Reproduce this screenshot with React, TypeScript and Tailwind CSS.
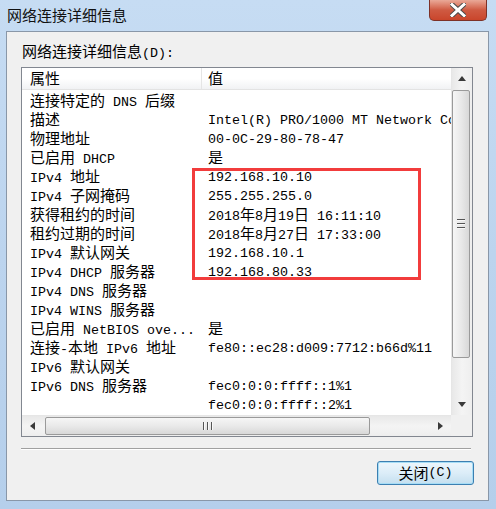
import React from "react";

const CJK_RUN = /([\u2E80-\u9FFF\uFF00-\uFFEF\u3000-\u303F]+)/;
const CJK_TEST = /[\u2E80-\u9FFF\uFF00-\uFFEF\u3000-\u303F]/;

function Mixed({ text }: { text: string }) {
  const parts = text.split(CJK_RUN);
  return (
    <>
      {parts.map((p, i) =>
        p === "" ? null : CJK_TEST.test(p) ? (
          <span key={i} className="font-['Noto_Sans_CJK_SC',sans-serif] text-[15px]">
            {p}
          </span>
        ) : (
          <span key={i} className="font-['Liberation_Mono',monospace] text-[13.33px]">
            {p}
          </span>
        )
      )}
    </>
  );
}

const rows: [string, string][] = [
  ["连接特定的 DNS 后缀", ""],
  ["描述", "Intel(R) PRO/1000 MT Network Connection"],
  ["物理地址", "00-0C-29-80-78-47"],
  ["已启用 DHCP", "是"],
  ["IPv4 地址", "192.168.10.10"],
  ["IPv4 子网掩码", "255.255.255.0"],
  ["获得租约的时间", "2018年8月19日 16:11:10"],
  ["租约过期的时间", "2018年8月27日 17:33:00"],
  ["IPv4 默认网关", "192.168.10.1"],
  ["IPv4 DHCP 服务器", "192.168.80.33"],
  ["IPv4 DNS 服务器", ""],
  ["IPv4 WINS 服务器", ""],
  ["已启用 NetBIOS ove...", "是"],
  ["连接-本地 IPv6 地址", "fe80::ec28:d009:7712:b66d%11"],
  ["IPv6 默认网关", ""],
  ["IPv6 DNS 服务器", "fec0:0:0:ffff::1%1"],
  ["", "fec0:0:0:ffff::2%1"],
];

function Arrow({ dir }: { dir: "up" | "down" | "left" | "right" }) {
  if (dir === "up")
    return (
      <svg width="8" height="5" viewBox="0 0 8 5">
        <path d="M4 0 L8 5 L0 5 Z" fill="#3a3a3a" />
      </svg>
    );
  if (dir === "down")
    return (
      <svg width="8" height="5" viewBox="0 0 8 5">
        <path d="M0 0 L8 0 L4 5 Z" fill="#3a3a3a" />
      </svg>
    );
  if (dir === "left")
    return (
      <svg width="5" height="8" viewBox="0 0 5 8">
        <path d="M5 0 L5 8 L0 4 Z" fill="#3a3a3a" />
      </svg>
    );
  return (
    <svg width="5" height="8" viewBox="0 0 5 8">
      <path d="M0 0 L5 4 L0 8 Z" fill="#3a3a3a" />
    </svg>
  );
}

function VScroll() {
  return (
    <div className="flex w-[21px] flex-col border-l border-[#e6e6e6] bg-gradient-to-r from-[#e8e8e8] via-[#f4f4f4] to-[#eeeeee]">
      <div className="flex h-[21px] items-center justify-center">
        <Arrow dir="up" />
      </div>
      <div className="flex-1 pt-[1px]">
        <div className="flex h-[268px] w-[18px] items-center justify-center rounded-[2px] border border-[#9a9a9a] bg-gradient-to-r from-[#f6f6f6] via-[#e9e9e9] to-[#d8d8d8]">
          <div className="flex flex-col gap-[2px]">
            <div className="h-[2px] w-[8px] border-b border-[#f8f8f8] bg-[#555]" />
            <div className="h-[2px] w-[8px] border-b border-[#f8f8f8] bg-[#555]" />
            <div className="h-[2px] w-[8px] border-b border-[#f8f8f8] bg-[#555]" />
          </div>
        </div>
      </div>
      <div className="flex h-[21px] items-center justify-center">
        <Arrow dir="down" />
      </div>
    </div>
  );
}

function HScroll() {
  return (
    <div className="flex h-[21px] w-[429px] border-t border-[#e6e6e6] bg-gradient-to-b from-[#e8e8e8] via-[#f4f4f4] to-[#eeeeee]">
      <div className="flex w-[21px] items-center justify-center">
        <Arrow dir="left" />
      </div>
      <div className="flex-1 pl-[2px] pt-[1px]">
        <div className="flex h-[18px] w-[325px] items-center justify-center rounded-[2px] border border-[#9a9a9a] bg-gradient-to-b from-[#f6f6f6] via-[#e9e9e9] to-[#d8d8d8]">
          <div className="flex gap-[2px]">
            <div className="h-[8px] w-[2px] border-r border-[#f8f8f8] bg-[#555]" />
            <div className="h-[8px] w-[2px] border-r border-[#f8f8f8] bg-[#555]" />
            <div className="h-[8px] w-[2px] border-r border-[#f8f8f8] bg-[#555]" />
          </div>
        </div>
      </div>
      <div className="flex w-[21px] items-center justify-center">
        <Arrow dir="right" />
      </div>
    </div>
  );
}

function CloseButton() {
  return (
    <div className="mr-[2px] flex h-[21px] w-[58px] items-center justify-center overflow-hidden rounded-b-[5px] border border-t-0 border-[#7d3127] bg-gradient-to-b from-[#e9a898] via-[#cf5a42] to-[#c9452b]">
      <svg width="16" height="14" viewBox="0 0 16 14">
        <path d="M2 1.5 L14 12.5 M14 1.5 L2 12.5" stroke="#4a4a4a" strokeWidth="5" strokeLinecap="square" />
        <path d="M2 1.5 L14 12.5 M14 1.5 L2 12.5" stroke="#ffffff" strokeWidth="3" strokeLinecap="square" />
      </svg>
    </div>
  );
}

export default function App() {
  return (
    <div className="relative flex h-[509px] w-[496px] flex-col overflow-hidden bg-gradient-to-b from-[#c6dcf3] via-[#bcd4ee] to-[#b5cfeb] pb-[8px] pl-[6px] pr-[7px] text-black">
      {/* Title bar */}
      <div className="flex h-[31px] items-start justify-between">
        <div className="pl-[1px] pt-[5px] font-['Noto_Sans_CJK_SC',sans-serif] text-[15px] leading-[20px] text-[#111]">
          网络连接详细信息
        </div>
        <CloseButton />
      </div>

      {/* Client area */}
      <div className="flex flex-1 flex-col border border-[#8997a8] bg-[#f0f0f0] pl-[14px] pt-[10px]">
        <div className="whitespace-pre pl-[1px] leading-[18px]">
          <Mixed text="网络连接详细信息(D):" />
        </div>

        <div className="mt-[4px] flex h-[370px] w-[452px] flex-col border border-[#828790] bg-white">
          <div className="flex h-[347px]">
            <div className="flex w-[429px] flex-col overflow-hidden">
              {/* header */}
              <div className="flex h-[22px] flex-none border-b border-[#e3e3e3] bg-gradient-to-b from-white via-white to-[#f1f2f4] leading-[20px]">
                <div className="w-[180px] flex-none border-r border-[#e5e5e5] pl-[8px] font-['Noto_Sans_CJK_SC',sans-serif] text-[15px]">
                  属性
                </div>
                <div className="pl-[6px] font-['Noto_Sans_CJK_SC',sans-serif] text-[15px]">值</div>
              </div>
              {rows.map(([k, v], i) => (
                <div key={i} className="flex h-[19px] flex-none whitespace-pre leading-[19px]">
                  <div className="w-[180px] flex-none overflow-hidden pl-[8px]">
                    <Mixed text={k} />
                  </div>
                  <div className="flex-none pl-[6px]">
                    <Mixed text={v} />
                  </div>
                </div>
              ))}
            </div>
            <VScroll />
          </div>
          <div className="flex h-[21px]">
            <HScroll />
            <div className="w-[21px] bg-[#f0f0f0]" />
          </div>
        </div>

        <div className="mt-[11px] h-[1px] w-[450px] bg-[#a0a0a0]" />
        <div className="h-[1px] w-[450px] bg-white" />

        <div className="flex justify-end pr-[14px] pt-[11px]">
          <div className="flex h-[24px] w-[97px] items-center justify-center whitespace-pre rounded-[3px] border border-[#3c7fb1] bg-gradient-to-b from-[#edf6fc] via-[#dcedf8] to-[#c4dfef] leading-[20px] shadow-[inset_0_0_0_1px_#a6ddf6]">
            <Mixed text="关闭(C)" />
          </div>
        </div>
      </div>

      {/* annotation rectangle */}
      <div className="absolute left-[192px] top-[168px] h-[112px] w-[229px] border-[3px] border-[#f23c3c]" />
    </div>
  );
}
